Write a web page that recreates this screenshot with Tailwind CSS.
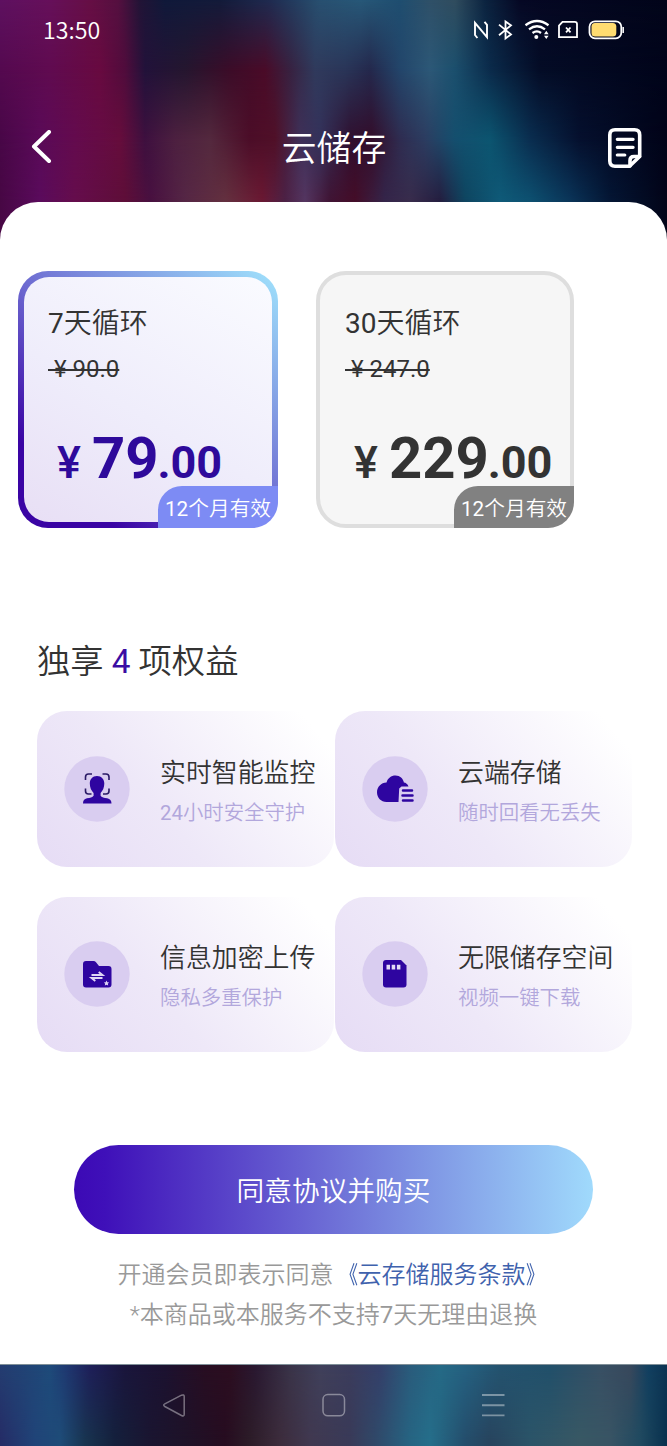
<!DOCTYPE html>
<html lang="zh-CN">
<head>
<meta charset="utf-8">
<meta name="viewport" content="width=device-width, initial-scale=1">
<title>云储存</title>
<script src="https://cdn.jsdelivr.net/npm/@tailwindcss/browser@4"></script>
<style>
/* Blurred wallpaper: horizontal colour bands that fade into each other from top to bottom */
.wall > i { position: absolute; inset: 0; }
.w0 { background: linear-gradient(90deg,#5e1160 0,#66105a 50px,#660f45 90px,#551040 118px,#221436 140px,#10193a 165px,#131b3a 220px,#1f2b50 270px,#285070 320px,#275878 360px,#1f4e70 400px,#2f5068 430px,#304c5e 455px,#0c2440 485px,#060824 520px,#02051a 667px); }
.w1 { background: linear-gradient(90deg,#54094f 0,#600b50 50px,#680a40 100px,#500c3c 125px,#22123a 145px,#25162f 185px,#3c0c28 230px,#4a0b28 265px,#382140 290px,#303a5c 315px,#2a3558 345px,#24284c 370px,#23456a 400px,#2c5877 430px,#1b4f6d 455px,#0b2b4b 490px,#040c26 540px,#01041a 667px); mask-image: linear-gradient(transparent 0,#000 70px); }
.w2 { background: linear-gradient(90deg,#480747 0,#5a0a58 40px,#640b4e 75px,#660d3c 120px,#3e103f 145px,#4d2040 175px,#54293e 210px,#4c0d28 250px,#501028 275px,#3f3058 300px,#34315a 320px,#301030 350px,#340d2a 372px,#2f2c50 400px,#2c3c60 425px,#144f6e 455px,#0c5570 490px,#0a2e50 530px,#05102e 580px,#010318 667px); mask-image: linear-gradient(transparent 70px,#000 140px); }
.w3 { background: linear-gradient(90deg,#470744 0,#5a0b5c 40px,#650d4c 75px,#5e0e38 125px,#481040 150px,#552645 185px,#63303f 225px,#6a1832 262px,#4c2145 285px,#543560 305px,#401434 330px,#440d28 355px,#34254a 385px,#382c4c 410px,#241e40 440px,#0e4560 465px,#0f5a78 500px,#0d5070 530px,#0a3458 570px,#041634 610px,#020418 667px); mask-image: linear-gradient(transparent 140px,#000 200px); }
.n0 { background: linear-gradient(90deg,#243c70 0,#1e4a7a 50px,#1f3a72 65px,#1e2058 90px,#1a163c 125px,#1c1230 165px,#280e22 205px,#2c0e20 230px,#2a1830 255px,#3a3348 290px,#40405a 320px,#3b3c5c 350px,#34406a 380px,#2a5c7c 410px,#256a86 440px,#256080 465px,#24526e 500px,#22506a 550px,#385064 600px,#38485c 630px,#124060 648px,#0c3352 667px); }
.n1 { background: linear-gradient(90deg,#252c66 0,#204478 35px,#1e4c78 60px,#183450 85px,#14203c 115px,#1a1530 150px,#1e1228 185px,#260c20 225px,#2c1c28 250px,#3c2c3c 280px,#403850 310px,#393a58 350px,#304868 375px,#266482 410px,#256e8a 430px,#244e6c 465px,#27445e 490px,#2b5468 530px,#385864 580px,#385464 610px,#204a60 640px,#08304e 667px); mask-image: linear-gradient(transparent 5px,#000 75px); }
</style>
</head>
<body>
<main class="relative flex h-[1446px] w-[667px] flex-col overflow-hidden text-[#333] [font-family:Roboto,'Noto_Sans_CJK_SC',sans-serif]">
  <div class="wall absolute inset-x-0 top-0 -z-10 h-[260px]"><i class="w0"></i><i class="w1"></i><i class="w2"></i><i class="w3"></i></div>

  <header class="flex h-[202px] shrink-0 flex-col text-white">
    <div class="flex h-[60px] shrink-0 items-center justify-between pl-[43px] pr-[42px]">
      <span class="-mt-px text-[23.200px] font-[350] leading-none [font-family:'Noto_Sans_CJK_SC',sans-serif]">13:50</span>
      <svg width="153" height="24" viewBox="472 18 153 24" fill="none" stroke="#fff" stroke-width="1.8">
        <path d="M477.400 38l-2.400-3V22.800l12 14.400V24.800l-2.500-3" stroke-width="1.900"/>
        <path d="M499 24.6l12 9.800-5.500 4V21.500l5.500 3.800-12 10"/>
        <path d="M525.5 25.2q11.5-8.400 23 0M529 29.300q8-6 16 0M532.500 33q4.500-3.200 8.500 0" stroke-width="2.300"/>
        <circle cx="536.300" cy="37" r="2" fill="#fff" stroke="none"/>
        <path d="M544 34.200l2.300-3.400 2.300 3.400zM544 35.800l2.300 3.200 2.300-3.200z" fill="#fff" stroke="none"/>
        <path d="M562.500 21.800h12.200q2.300 0 2.300 2.300v13h-18v-11.500z"/><path d="M566 27.500l4.500 4.800m0-4.800l-4.500 4.800"/>
        <rect x="589.500" y="21.300" width="31.800" height="17" rx="5.500"/><rect x="591.500" y="23" width="24.800" height="13.500" rx="3.500" fill="#ffdc70" stroke="none"/>
        <path d="M623.200 27v6" stroke-width="1.500"/>
      </svg>
    </div>
    <div class="flex h-[142px] shrink-0 items-center justify-between pl-[30px] pr-[24px] pt-[34px]">
      <svg width="24" height="36" viewBox="0 0 24 36" fill="none" stroke="#fff" stroke-width="4" stroke-linecap="round" stroke-linejoin="round"><path d="M19 2L4 16.500l15 14.500"/></svg>
      <h1 class="pl-[7px] pt-[3px] text-[34.800px] font-[350] leading-none">云储存</h1>
      <svg width="36" height="42" viewBox="0 0 36 42" fill="none" stroke="#fff" stroke-width="3.600" stroke-linecap="round" stroke-linejoin="round"><path d="M22.500 39.200H8Q2.800 39.200 2.800 34V8Q2.800 2.800 8 2.800h19.500Q32.700 2.800 32.700 8v21.500z"/><path d="M32.500 29.500h-5.500q-4 0-4 4v5.500"/><path d="M10.300 12.300h15.800M10.300 20.300h15.800M10.300 28h7.500" stroke-width="3.200"/></svg>
    </div>
  </header>

  <section class="z-10 flex h-[1162px] shrink-0 flex-col rounded-t-[38px] bg-white font-[350]">
    <div class="flex gap-[38px] pl-[18px] pt-[69px]">
      <article class="relative h-[257px] w-[260px] rounded-[30px] bg-[linear-gradient(42deg,#3a04a4_18%,#6c68d0_50%,#9ddcfa_97%)] p-[6px]">
        <div class="flex h-full flex-col rounded-[25px] bg-[linear-gradient(30deg,#e8dff5_0%,#efedfb_45%,#fafbff_100%)] pl-[24px] pt-[31px]">
          <h2 class="text-[28px] leading-[32px] font-[350]"><span class="font-normal">7</span>天循环</h2>
          <del class="mt-[15px] text-[24px] font-normal leading-[28px] decoration-[1.5px]">&nbsp;¥&nbsp;90.0</del>
          <p class="mt-[45px] flex items-baseline pl-[9px] font-bold leading-[60px] text-[#2e0a9b]"><span class="text-[45px] font-medium">¥</span><span class="ml-[11px] text-[58px]">79</span><span class="-ml-px text-[45px]">.00</span></p>
        </div>
        <span class="absolute bottom-0 right-0 flex h-[42px] w-[120px] items-center justify-center rounded-br-[26px] rounded-tl-[24px] bg-[#7d8bf4] pt-[5px] text-[20.700px] text-white"><span class="font-normal">12</span>个月有效</span>
      </article>
      <article class="relative flex h-[257px] w-[258px] flex-col rounded-[30px] border-4 border-[#dedede] bg-[#f6f6f6] pl-[25px] pt-[33px]">
        <h2 class="text-[28px] leading-[32px] font-[350]"><span class="font-normal">30</span>天循环</h2>
        <del class="mt-[15px] text-[24px] font-normal leading-[28px] decoration-[1.5px]">&nbsp;¥&nbsp;247.0</del>
        <p class="mt-[45px] flex items-baseline pl-[9px] font-bold leading-[60px]"><span class="text-[45px] font-medium">¥</span><span class="ml-[11px] text-[58px]">229</span><span class="-ml-px text-[45px]">.00</span></p>
        <span class="absolute -bottom-1 -right-1 flex h-[42px] w-[120px] items-center justify-center rounded-br-[26px] rounded-tl-[24px] bg-[#818181] pt-[5px] text-[20.700px] text-white"><span class="font-normal">12</span>个月有效</span>
      </article>
    </div>

    <h2 class="mt-[109px] pl-[37px] text-[33.300px] font-[350] leading-[50px]">独享 <span class="font-normal text-[#3a0ca3]">4</span> 项权益</h2>

    <div class="mt-[24px] grid grid-cols-[297px_297px] gap-x-px gap-y-[30px] pl-[37px]">
      <article class="flex h-[155.500px] items-center rounded-[30px] bg-[linear-gradient(50deg,#e6dcf5_0%,#eee8f8_40%,#ffffff_92%)] pl-[27px]">
        <svg width="66" height="66" viewBox="0 0 66 66" fill="none"><circle cx="33" cy="33" r="32.700" fill="#d9cdf0"/><path d="M21.500 24v-3q0-3 3-3h3.500M38.500 18H42q3 0 3 3v3M21.500 32.500V35q0 3 3 3h3M45 32.500V35q0 3-3 3h-3" stroke="#2a1a66" stroke-width="1.600"/><path d="M33 20c-4.500 0-7.200 3.200-7.200 7.600 0 4 1.500 7.300 3.800 9.300v2.800c-1 1.800-3.600 2-6.600 2.600-2.800.7-4 2-4 5.200h28.500c0-3.200-1.400-4.500-4.300-5.200-3-.6-5.800-.8-6.600-2.600v-2.800c2.200-2 3.700-5.300 3.700-9.300 0-4.400-2.800-7.600-7.300-7.600z" fill="#2e05a0"/></svg>
        <div class="pl-[30px] pt-[8px]"><h3 class="text-[25.900px] font-[350] leading-[40px]">实时智能监控</h3><p class="text-[20.400px] leading-[40px] text-[#b2a7dc]"><span class="font-normal">24</span>小时安全守护</p></div>
      </article>
      <article class="flex h-[155.500px] items-center rounded-[30px] bg-[linear-gradient(50deg,#e6dcf5_0%,#eee8f8_40%,#ffffff_92%)] pl-[27px]">
        <svg width="66" height="66" viewBox="0 0 66 66" fill="none"><circle cx="33" cy="33" r="32.700" fill="#d9cdf0"/><path d="M36.500 46H24.500C19 46 15 41.800 15 36.300c0-5.300 4.200-9.500 9.500-9.700 1.200-4.300 4.600-7 9-7 4.500 0 7.600 2.900 8.400 7 2 .2 3.700 1.600 4.600 3.900H39.500l-2.300 2z" fill="#2e05a0"/><path d="M41 34.500h9M40.500 39.500h10M41 44.500h9.500" stroke="#2e05a0" stroke-width="2.500" stroke-linecap="round"/></svg>
        <div class="pl-[30px] pt-[8px]"><h3 class="text-[25.900px] font-[350] leading-[40px]">云端存储</h3><p class="text-[20.400px] leading-[40px] text-[#b2a7dc]">随时回看无丢失</p></div>
      </article>
      <article class="flex h-[155.500px] items-center rounded-[30px] bg-[linear-gradient(50deg,#e6dcf5_0%,#eee8f8_40%,#ffffff_92%)] pl-[27px]">
        <svg width="66" height="66" viewBox="0 0 66 66" fill="none"><circle cx="33" cy="33" r="32.700" fill="#d9cdf0"/><path d="M22 20h7.500q1.500 0 2.500 1.200L35 25h9.500q3 0 3 3v15.500q0 3-3 3H22q-3 0-3-3V23q0-3 3-3z" fill="#2e05a0"/><path d="M27.500 34h11l-3.800-3M38.500 37h-11l3.800 3" stroke="#e0d6f4" stroke-width="1.900"/><path d="M42.500 39.500l.8 1.700 1.800.2-1.300 1.300.4 1.900-1.700-.9-1.700.9.400-1.900-1.300-1.300 1.800-.2z" fill="#e0d6f4"/></svg>
        <div class="pl-[30px] pt-[8px]"><h3 class="text-[25.900px] font-[350] leading-[40px]">信息加密上传</h3><p class="text-[20.400px] leading-[40px] text-[#b2a7dc]">隐私多重保护</p></div>
      </article>
      <article class="flex h-[155.500px] items-center rounded-[30px] bg-[linear-gradient(50deg,#e6dcf5_0%,#eee8f8_40%,#ffffff_92%)] pl-[27px]">
        <svg width="66" height="66" viewBox="0 0 66 66" fill="none"><circle cx="33" cy="33" r="32.700" fill="#d9cdf0"/><path d="M24 19h15l5.500 5.500V43.500q0 3-3 3H24q-3 0-3-3V22q0-3 3-3z" fill="#2e05a0"/><path d="M24.500 23.800h3.500v4.800h-3.500zM29.700 23.800h3.500v4.800h-3.500zM34.900 23.800h3.500v4.800h-3.500z" fill="#e4dcf6"/></svg>
        <div class="pl-[30px] pt-[8px]"><h3 class="text-[25.900px] font-[350] leading-[40px]">无限储存空间</h3><p class="text-[20.400px] leading-[40px] text-[#b2a7dc]">视频一键下载</p></div>
      </article>
    </div>

    <button class="mx-auto mt-[93px] h-[89px] w-[519px] shrink-0 rounded-full bg-[linear-gradient(90deg,#3c09b5_0%,#3f10b9_6%,#6c6bd5_48%,#7f96e4_68%,#a0dafc_100%)] pt-[4px] text-[27.700px] font-[350] text-white">同意协议并购买</button>
    <div class="mt-[21px] text-center text-[24px] leading-[40px] text-[#999]">
      <p>开通会员即表示同意<a class="text-[#3f62ad]"><span class="inline-block origin-right scale-x-75 font-normal">《</span>云存储服务条款<span class="inline-block origin-left scale-x-75 font-normal">》</span></a></p>
      <p>*本商品或本服务不支持<span class="font-normal">7</span>天无理由退换</p>
    </div>
  </section>

  <nav class="wall relative flex h-[82px] items-center border-t border-[#7f8f98]">
    <i class="n0"></i><i class="n1"></i>
    <svg class="relative" width="667" height="81" viewBox="0 1365 667 81" fill="none" stroke="#fff" stroke-opacity=".4" stroke-width="1.500" stroke-linejoin="round"><path d="M164.800 1403.800L181.500 1395.200Q184.200 1394.200 184.200 1396.500V1414.500Q184.200 1416.800 181.500 1415.500L164.800 1406.500Q162.500 1405 164.800 1403.800z"/><rect x="323" y="1394.500" width="21.500" height="21.300" rx="4.800"/><path d="M482 1395h22.500M482 1405.200h22.500M482 1415.400h22.500" stroke-width="1.900"/></svg>
  </nav>
</main>
</body>
</html>
